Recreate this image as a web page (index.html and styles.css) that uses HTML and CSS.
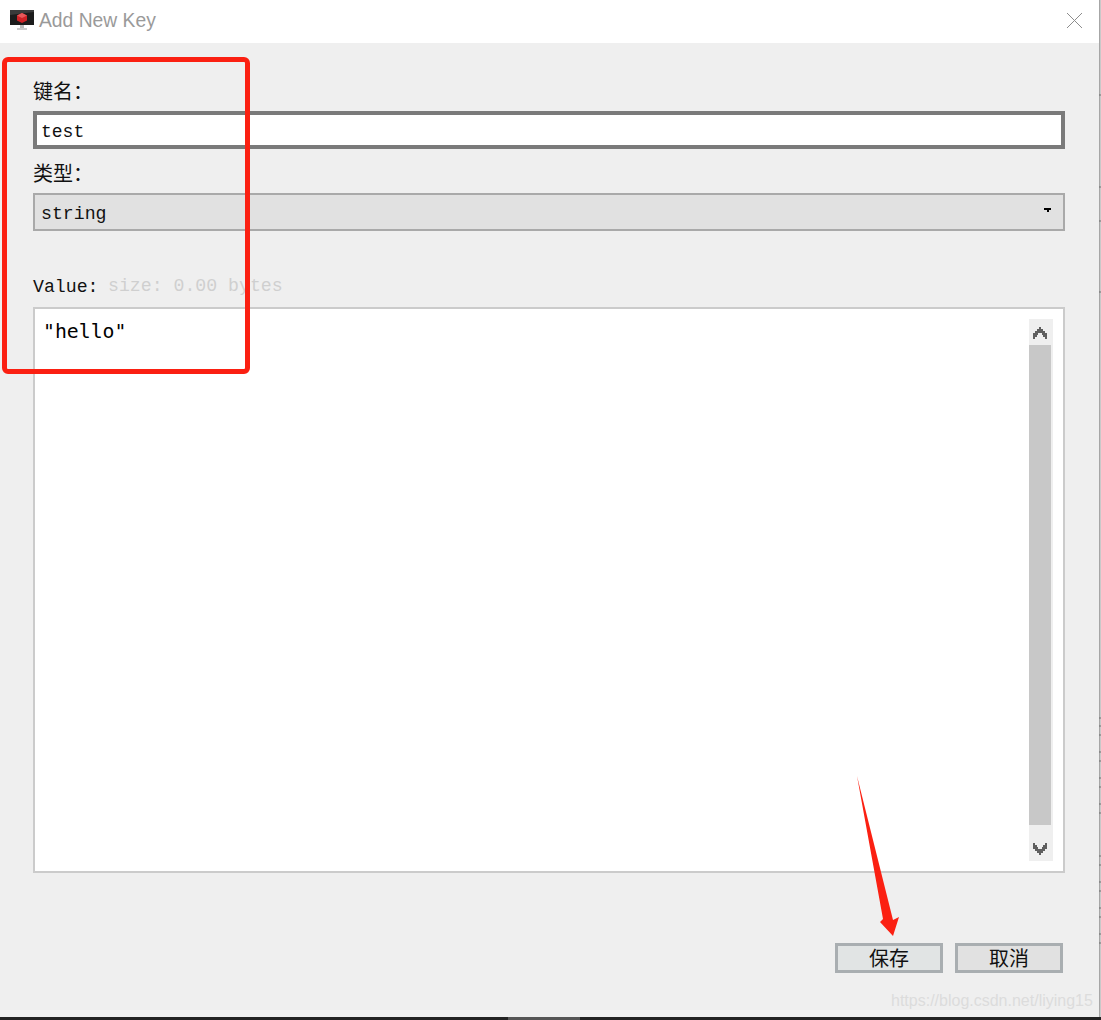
FILE: index.html
```html
<!DOCTYPE html>
<html lang="en">
<head>
  <meta charset="UTF-8" />
  <meta name="viewport" content="width=device-width, initial-scale=1.0" />
  <title>Add New Key</title>
  <link rel="stylesheet" href="styles.css">
</head>
<body>
  <div class="window">
    <div class="titlebar">
      <svg class="app-icon" width="26" height="22" viewBox="0 0 26 22">
        <rect x="2" y="1" width="24" height="15" fill="#1c1c1c" />
        <path d="M2 1h24v2L2 6z" fill="#3a3a3a" />
        <path d="M9 6.5L14 4l5 2.5v5L14 14l-5-2.5z" fill="#cf2226" />
        <path d="M9 6.5L14 9l5-2.5L14 4z" fill="#e9585a" />
        <rect x="12" y="16" width="4" height="3" fill="#bbb" />
        <rect x="9" y="19" width="10" height="2" fill="#ccc" />
      </svg>
      <span class="title">Add New Key</span>
      <svg class="close" width="17" height="17" viewBox="0 0 17 17">
        <path d="M1 1l15 15M16 1L1 16" stroke="#8c8c8c" stroke-width="1" fill="none" />
      </svg>
    </div>

    <div class="content">
      <label class="label key-label">键名：</label>
      <div class="key-input">test</div>
      <label class="label type-label">类型：</label>
      <div class="type-select">
        <span>string</span>
        <svg width="7" height="4" viewBox="0 0 7 4"><path d="M0 0h7v2H5v2H3V2H0z" fill="#000" /></svg>
      </div>

      <div class="value-row">
        <span class="value-label">Value:</span>
        <span class="size">size: 0.00 bytes</span>
      </div>
      <div class="value-box">
        <div class="value-text">"hello"</div>
        <div class="scrollbar">
          <div class="scroll-btn top">
            <svg width="14" height="12" viewBox="0 0 14 12"><path d="M6 0h2v2h2v2h2v2h2v6h-2v-2h-2V8H9V6H5v2H4v2H2v2H0V6h2V4h2V2h2z" fill="#5f5f5f" /></svg>
          </div>
          <div class="thumb"></div>
          <div class="scroll-btn bottom">
            <svg width="14" height="12" viewBox="0 0 14 12"><path d="M0 0h2v2h2v2h1v2h4V4h1V2h2V0h2v6h-2v2h-2v2H8v2H6v-2H4V8H2V6H0z" fill="#5f5f5f" /></svg>
          </div>
        </div>
      </div>

      <div class="actions">
        <button class="btn save">保存</button>
        <button class="btn">取消</button>
      </div>
    </div>
    <div class="taskbar">
      <div class="task-active"></div>
    </div>
  </div>

  <!-- window edge of the desktop behind, with its tick marks -->
  <svg class="edge" width="2" height="1017" viewBox="0 0 2 1017">
    <path d="M0.5 0V1017" stroke="#a6a6a6" fill="none" />
    <path d="M0 95h2M0 187h2M0 221h2M0 292h2M0 718h2M0 726h2M0 735h2M0 752h2M0 761h2M0 778h2M0 787h2M0 804h2M0 813h2M0 856h2M0 865h2M0 882h2M0 891h2M0 908h2M0 917h2M0 934h2M0 943h2" stroke="#6e6e6e" fill="none" />
  </svg>

  <!-- annotations drawn over the screenshot -->
  <div class="red-box"></div>
  <svg class="arrow" width="50" height="165" viewBox="0 0 50 165">
    <path d="M1 1L27 144 24 147 37 161 43 142 37 145z" fill="#fb2012" />
  </svg>
  <span class="watermark">https://blog.csdn.net/liying15</span>
</body>
</html>
```

FILE: styles.css
```css
* {
  box-sizing: border-box;
}
html, body {
  margin: 0;
  height: 100%;
}
body {
  position: relative;
  overflow: hidden;
  background: #efefef;
  font-family: "Liberation Mono", "Noto Sans CJK SC", monospace;
  color: #111;
}
.window {
  display: flex;
  flex-direction: column;
  height: 1020px;
  border-right: 2px solid #c9c9c9;
}
.titlebar {
  display: flex;
  align-items: center;
  flex: none;
  height: 43px;
  padding: 0 16px 3px 8px;
  background: #fff;
}
.app-icon {
  flex: none;
}
.title {
  margin-left: 5px;
  padding-top: 2px;
  font-family: "Liberation Sans", Arial, sans-serif;
  font-size: 19.3px;
  color: #9a9a9a;
}
.close {
  margin-left: auto;
}
.content {
  display: flex;
  flex-direction: column;
  flex: 1;
  padding: 0 34px 0 33px;
}
.label {
  display: block;
  height: 22px;
  font-family: "Noto Sans CJK SC", sans-serif;
  font-size: 20px;
  line-height: 22px;
}
.key-label {
  margin-top: 37px;
}
.key-input {
  height: 38px;
  margin-top: 9px;
  padding-left: 4px;
  border: 4px solid #7a7a7a;
  background: #fff;
  font-size: 18px;
  line-height: 35px;
}
.type-label {
  margin-top: 13px;
}
.type-select {
  display: flex;
  align-items: center;
  justify-content: space-between;
  height: 38px;
  margin-top: 9px;
  padding: 4px 12px 0 6px;
  border: 2px solid #a9a9a9;
  background: #e1e1e1;
  font-size: 18.2px;
}
.type-select svg {
  margin-top: -8px;
}
.value-row {
  display: flex;
  align-items: center;
  height: 22px;
  margin-top: 44px;
  font-size: 18.2px;
}
.value-label {
  width: 75px;
  padding-top: 2px;
}
.size {
  color: #cfcfcf;
}
.value-box {
  display: flex;
  justify-content: space-between;
  height: 566px;
  margin-top: 10px;
  padding: 10px 10px 10px 8px;
  border: 2px solid #cbcbcb;
  background: #fff;
}
.value-text {
  padding-top: 1px;
  font-family: "DejaVu Sans Mono", "Liberation Mono", monospace;
  font-size: 19.8px;
  line-height: 24px;
  color: #000;
}
.scrollbar {
  display: flex;
  flex-direction: column;
  width: 24px;
  background: #efefef;
}
.scroll-btn {
  display: flex;
  justify-content: center;
  flex: none;
  padding-right: 3px;
}
.scroll-btn.top {
  height: 26px;
  padding-top: 8px;
}
.scroll-btn.bottom {
  height: 36px;
  padding-top: 18px;
}
.thumb {
  flex: 1;
  width: 22px;
  background: #c8c8c8;
}
.actions {
  display: flex;
  justify-content: flex-end;
  gap: 12px;
  margin-top: 70px;
  padding-right: 2px;
}
.btn {
  width: 108px;
  height: 30px;
  padding: 0;
  border: 3px solid #a9aeb1;
  background: #e1e1e1;
  font-family: "Noto Sans CJK SC", sans-serif;
  font-size: 20px;
  line-height: 24px;
  color: #111;
}
.save {
  background: #e1e4e4;
}
.taskbar {
  flex: none;
  height: 3px;
  margin-top: auto;
  margin-right: -2px;
  padding-left: 508px;
  background: #222;
}
.task-active {
  width: 72px;
  height: 3px;
  background: #555;
}
.edge {
  position: absolute;
  right: 0;
  top: 0;
}
.red-box {
  position: absolute;
  left: 2px;
  top: 57px;
  width: 248px;
  height: 317px;
  border: 5px solid #fb2012;
  border-radius: 6px;
}
.arrow {
  position: absolute;
  left: 856px;
  top: 775px;
}
.watermark {
  position: absolute;
  left: 891px;
  top: 992px;
  font-family: "Liberation Sans", Arial, sans-serif;
  font-size: 16px;
  color: #dcdcdc;
}
```
